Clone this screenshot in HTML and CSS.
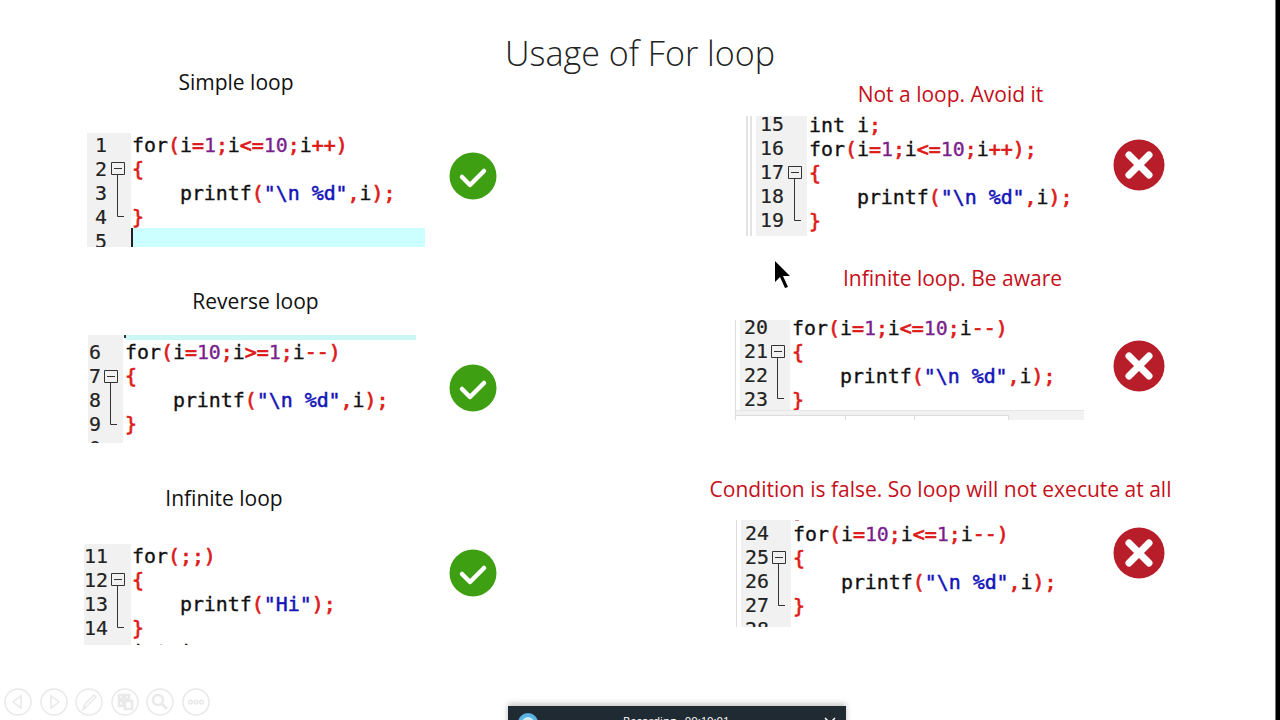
FILE: index.html
```html
<!DOCTYPE html>
<html lang="en">
<head>
<meta charset="utf-8">
<title>Usage of For loop</title>
<link rel="stylesheet" href="styles.css">
</head>
<body>
<main class="slide">
  <h1 class="title">Usage of For loop</h1>

  <h2 class="label l1">Simple loop</h2>
  <div class="snippet s1">
    <div class="gutter"><span>1</span><span>2</span><span>3</span><span>4</span><span>5</span></div>
    <svg class="fold" width="14" height="68" viewBox="0 0 14 68"><path d="M.5.5h13v12H.5zM3 6.500h8M6.500 13v41.500H13" fill="none" stroke="#333"/></svg>
    <div class="code">
      <div class="line">for<b>(</b>i<b>=</b><i>1</i><b>;</b>i<b>&lt;=</b><i>10</i><b>;</b>i<b>++)</b></div>
      <div class="line"><b>{</b></div>
      <div class="line">    printf<b>(</b><em>"\n %d"</em><b>,</b>i<b>);</b></div>
      <div class="line"><b>}</b></div>
      <div class="line current"></div>
    </div>
  </div>
  <svg class="mark m1" viewBox="0 0 48 48"><use href="#ok"/></svg>

  <h2 class="label l2">Reverse loop</h2>
  <div class="snippet s2">
    <div class="gutter"><span>6</span><span>7</span><span>8</span><span>9</span><span>0</span></div>
    <svg class="fold" width="14" height="68" viewBox="0 0 14 68"><path d="M.5.5h13v12H.5zM3 6.500h8M6.500 13v41.500H13" fill="none" stroke="#333"/></svg>
    <div class="code">
      <div class="strip"></div>
      <div class="line">for<b>(</b>i<b>=</b><i>10</i><b>;</b>i<b>&gt;=</b><i>1</i><b>;</b>i<b>--)</b></div>
      <div class="line"><b>{</b></div>
      <div class="line">    printf<b>(</b><em>"\n %d"</em><b>,</b>i<b>);</b></div>
      <div class="line"><b>}</b></div>
    </div>
  </div>
  <svg class="mark m2" viewBox="0 0 48 48"><use href="#ok"/></svg>

  <h2 class="label l3">Infinite loop</h2>
  <div class="snippet s3">
    <div class="gutter"><span>11</span><span>12</span><span>13</span><span>14</span><span>15</span></div>
    <svg class="fold" width="14" height="68" viewBox="0 0 14 68"><path d="M.5.5h13v12H.5zM3 6.500h8M6.500 13v41.500H13" fill="none" stroke="#333"/></svg>
    <div class="code">
      <div class="line">for<b>(;;)</b></div>
      <div class="line"><b>{</b></div>
      <div class="line">    printf<b>(</b><em>"Hi"</em><b>);</b></div>
      <div class="line"><b>}</b></div>
      <div class="line">int i<b>;</b></div>
    </div>
  </div>
  <svg class="mark m3" viewBox="0 0 48 48"><use href="#ok"/></svg>

  <h2 class="label bad l4">Not a loop. Avoid it</h2>
  <div class="snippet s4">
    <div class="gutter"><span>15</span><span>16</span><span>17</span><span>18</span><span>19</span></div>
    <svg class="fold" width="14" height="68" viewBox="0 0 14 68"><path d="M.5.5h13v12H.5zM3 6.500h8M6.500 13v41.500H13" fill="none" stroke="#333"/></svg>
    <div class="code">
      <div class="line">int i<b>;</b></div>
      <div class="line">for<b>(</b>i<b>=</b><i>1</i><b>;</b>i<b>&lt;=</b><i>10</i><b>;</b>i<b>++);</b></div>
      <div class="line"><b>{</b></div>
      <div class="line">    printf<b>(</b><em>"\n %d"</em><b>,</b>i<b>);</b></div>
      <div class="line"><b>}</b></div>
    </div>
  </div>
  <svg class="mark m4" viewBox="0 0 52 52"><use href="#no"/></svg>

  <svg class="cursor" width="18" height="30" viewBox="0 0 18 30"><path d="M1 1v21l5-5 5 11 3-1-5-11h7z" fill="#000"/></svg>

  <h2 class="label bad l5">Infinite loop. Be aware</h2>
  <div class="snippet s5">
    <div class="gutter"><span>20</span><span>21</span><span>22</span><span>23</span></div>
    <svg class="fold" width="14" height="54" viewBox="0 0 14 54"><path d="M.5.5h13v12H.5zM3 6.500h8M6.500 13v40.500H13" fill="none" stroke="#333"/></svg>
    <div class="code">
      <div class="line">for<b>(</b>i<b>=</b><i>1</i><b>;</b>i<b>&lt;=</b><i>10</i><b>;</b>i<b>--)</b></div>
      <div class="line"><b>{</b></div>
      <div class="line">    printf<b>(</b><em>"\n %d"</em><b>,</b>i<b>);</b></div>
      <div class="line"><b>}</b></div>
    </div>
    <div class="tabs"><span class="tab t1"></span><span class="tab t2"></span><span class="tab t3"></span></div>
  </div>
  <svg class="mark m5" viewBox="0 0 52 52"><use href="#no"/></svg>

  <h2 class="label bad l6">Condition is false. So loop will not execute at all</h2>
  <div class="snippet s6">
    <div class="gutter"><span>24</span><span>25</span><span>26</span><span>27</span><span>28</span></div>
    <svg class="fold" width="14" height="68" viewBox="0 0 14 68"><path d="M.5.5h13v12H.5zM3 6.500h8M6.500 13v41.500H13" fill="none" stroke="#333"/></svg>
    <div class="code">
      <div class="line">for<b>(</b>i<b>=</b><i>10</i><b>;</b>i<b>&lt;=</b><i>1</i><b>;</b>i<b>--)</b></div>
      <div class="line"><b>{</b></div>
      <div class="line">    printf<b>(</b><em>"\n %d"</em><b>,</b>i<b>);</b></div>
      <div class="line"><b>}</b></div>
    </div>
  </div>
  <svg class="mark m6" viewBox="0 0 52 52"><use href="#no"/></svg>

  <nav class="controls">
    <svg width="28" height="28" viewBox="0 0 28 28"><circle cx="14" cy="14" r="13"/><path d="M17 8v12l-8-6z"/></svg>
    <svg width="28" height="28" viewBox="0 0 28 28"><circle cx="14" cy="14" r="13"/><path d="M11 8v12l8-6z"/></svg>
    <svg width="28" height="28" viewBox="0 0 28 28"><circle cx="14" cy="14" r="13"/><path d="M8 21l2-5 9-9 2 2-9 9zM8 21l3-1"/></svg>
    <svg width="28" height="28" viewBox="0 0 28 28"><circle cx="14" cy="14" r="13"/><path class="thick" d="M8 7h4v4H8zM8 13h4v5H8zM14 7h4v4h-4zM14 13h7v8h-7z"/></svg>
    <svg width="28" height="28" viewBox="0 0 28 28"><circle cx="14" cy="14" r="13"/><circle class="thick" cx="12" cy="12" r="5"/><path class="thick" d="M16 16l5 5"/></svg>
    <svg width="28" height="28" viewBox="0 0 28 28"><circle cx="14" cy="14" r="13"/><circle cx="8.500" cy="14" r="1.800"/><circle cx="14" cy="14" r="1.800"/><circle cx="19.500" cy="14" r="1.800"/></svg>
  </nav>

  <div class="recorder">
    <svg class="globe" width="22" height="22" viewBox="0 0 22 22"><circle cx="10" cy="11" r="10" fill="#5bb4e6"/><circle cx="10" cy="11" r="6" fill="#cfeafa"/></svg>
    <span class="rec-text">Recording&nbsp;&nbsp;&nbsp;00:10:01</span>
    <svg class="rec-close" width="12" height="12" viewBox="0 0 12 12"><path d="M1 1l10 10M11 1L1 11" stroke="#fff" stroke-width="1.500"/></svg>
  </div>

  <div class="edge"></div>
</main>

<svg class="defs" width="0" height="0">
  <symbol id="ok" viewBox="0 0 48 48"><circle cx="24" cy="24" r="23.500" fill="#3f9f12"/><path d="M13 25l8 8 14-14" fill="none" stroke="#fff" stroke-width="4.500" stroke-linecap="round" stroke-linejoin="round"/></symbol>
  <symbol id="no" viewBox="0 0 52 52"><circle cx="26" cy="26" r="25.500" fill="#b81d2a"/><path d="M16 16l20 20M36 16L16 36" stroke="#fff" stroke-width="7" stroke-linecap="round"/></symbol>
</svg>
</body>
</html>
```
FILE: styles.css
```css
* { box-sizing: border-box; }
html, body { margin: 0; padding: 0; }
body { width: 1280px; height: 720px; overflow: hidden; background: #fff; }
.slide { position: relative; width: 1280px; height: 720px; overflow: hidden; background: #fff; font-family: "Open Sans", "Noto Sans", sans-serif; }
.defs { position: absolute; }
.title { position: absolute; left: 0; top: 31px; width: 1280px; margin: 0; text-align: center; font-size: 34.100px; line-height: 45px; font-weight: 300; color: #222; }
.label { position: absolute; margin: 0; font-size: 21px; line-height: 28px; font-weight: 400; color: #111; white-space: nowrap; transform: translateX(-50%); }
.bad { color: #c5101a; }
.l1 { left: 236px; top: 68px; }
.l2 { left: 255.500px; top: 287px; }
.l3 { left: 224px; top: 484px; }
.l4 { left: 950.500px; top: 80px; }
.l5 { left: 952.500px; top: 264px; }
.l6 { left: 940.500px; top: 475px; }

.snippet { position: absolute; display: flex; overflow: hidden; font-family: "DejaVu Sans Mono", "Liberation Mono", monospace; font-size: 19.900px; line-height: 24px; color: #111; }
.gutter { flex: none; display: flex; flex-direction: column; background: #f1f1f1; color: #222; -webkit-text-stroke: .2px currentColor; }
.gutter span { height: 24px; flex: none; display: block; }
.code { flex: 1; min-width: 0; padding-top: 1px; -webkit-text-stroke: .35px currentColor; }
.line { height: 24px; white-space: pre; }
.line b { color: #dd1a1a; font-weight: 400; -webkit-text-stroke: .7px currentColor; }
.line i { color: #7a1f8c; font-style: normal; }
.line em { color: #1414b8; font-style: normal; -webkit-text-stroke: .5px currentColor; }
.current { background: #ccffff; border-left: 2px solid #222; height: 19px; margin-top: -2px; }
.strip { height: 5px; margin-bottom: 0; background: #ccf7f7; position: relative; }
.strip::before { content: ""; position: absolute; left: -1px; top: 0; width: 2px; height: 3px; background: #333; }
.fold { position: absolute; }

.s1 { left: 87px; top: 133px; width: 338px; height: 114px; }
.s1 .gutter { width: 44px; padding: 1px 0 0 8px; }
.s1 .code { margin-left: 1px; }
.s1 .current { margin-left: -1px; }
.s1 .fold { left: 24px; top: 29px; }

.s2 { left: 88px; top: 335px; width: 328px; height: 108px; }
.s2 .gutter { width: 35px; padding: 6px 0 0 1px; }
.s2 .code { margin-left: 2px; padding-top: 0; }
.s2 .strip { margin-bottom: 1px; }
.s2 .fold { left: 16px; top: 35px; }

.s3 { left: 84px; top: 544px; width: 300px; height: 101px; }
.s3 .gutter { width: 47px; padding: 1px 0 0 0; }
.s3 .code { margin-left: 1px; }
.s3 .fold { left: 27px; top: 29px; }

.s4 { left: 746px; top: 116px; width: 340px; height: 120px; padding-left: 10px; background: linear-gradient(90deg, #e4e4e4 0, #e4e4e4 2px, #fff 2px, #fff 4px, #e4e4e4 4px, #e4e4e4 6px, #fff 6px); }
.s4 .gutter { width: 51px; padding: 0 0 0 4px; margin-top: -3px; }
.s4 .code { margin-left: 2px; margin-top: -3px; }
.s4 .fold { left: 42px; top: 50px; }

.s5 { left: 735px; top: 320px; width: 349px; height: 100px; border-left: 1px solid #ddd; padding-left: 4px; }
.s5 .gutter { width: 50px; padding: 0 0 0 4px; margin-top: -4px; }
.s5 .code { margin-left: 2px; margin-top: -4px; }
.s5 .fold { left: 35px; top: 25px; }
.tabs { position: absolute; left: 0; right: 0; bottom: 0; height: 10px; background: #f2f2f2; border-top: 1px solid #e6e6e6; }
.tab { position: absolute; top: 4px; height: 6px; background: #fff; border-top: 1px solid #ddd; border-right: 1px solid #ddd; }
.t1 { left: 0; width: 110px; }
.t2 { left: 110px; width: 69px; }
.t3 { left: 179px; width: 94px; }

.s6 { left: 736px; top: 520px; width: 340px; height: 107px; border-left: 1px solid #ddd; padding-left: 4px; }
.s6::after { content: ""; position: absolute; left: 58px; top: 0; width: 4px; height: 1px; background: #d98a8a; }
.s6 .gutter { width: 50px; padding: 2px 0 0 4px; }
.s6 .code { margin-left: 2px; margin-top: 2px; }
.s6 .fold { left: 35px; top: 31px; }

.mark { position: absolute; }
.m1, .m2, .m3 { left: 449px; width: 48px; height: 48px; }
.m1 { top: 152px; }
.m2 { top: 364px; }
.m3 { top: 549px; }
.m4, .m5, .m6 { left: 1113px; width: 52px; height: 52px; }
.m4 { top: 139px; }
.m5 { top: 340px; }
.m6 { top: 527px; }
.cursor { position: absolute; left: 774px; top: 260px; }

.controls { position: absolute; left: 4px; top: 688px; display: flex; gap: 7.500px; opacity: .75; }
.controls svg { fill: none; stroke: #e2e2e2; stroke-width: 1.500; }
.controls .thick { stroke-width: 2.500; }

.recorder { position: absolute; left: 508px; top: 706px; width: 338px; height: 26px; display: flex; align-items: flex-start; background: #1f2a33; box-shadow: 0 -2px 6px rgba(0,0,0,.25); color: #fff; font-family: "Open Sans", sans-serif; font-size: 11.300px; line-height: 30px; }
.globe { margin: 6px 0 0 10px; flex: none; }
.rec-text { margin-left: 83px; white-space: nowrap; }
.rec-close { margin: 11px 10px 0 auto; flex: none; }
.edge { position: absolute; left: 1275px; top: 0; width: 5px; height: 720px; background: #000; border-left: 1px solid #777; }
```
